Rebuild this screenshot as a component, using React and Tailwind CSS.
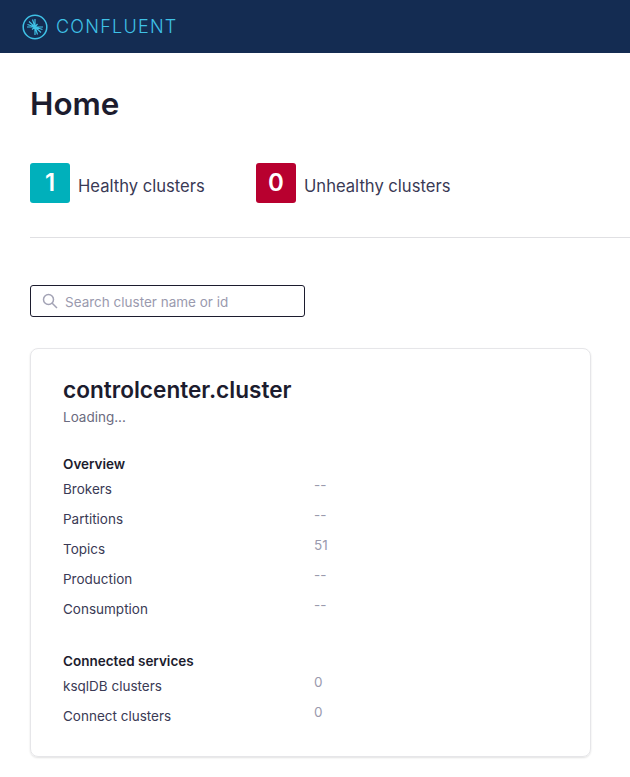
const font = { fontFamily: 'Inter, sans-serif' };

const Row = ({ label, value }) => (
  <div className="flex h-[30px]">
    <div className="w-[251px] pt-[5px] text-[13.5px] leading-5 text-[#3a3a55]">{label}</div>
    <div className="pt-[1px] text-[13.5px] leading-5 text-[#9a9aae]">{value}</div>
  </div>
);

const Stat = ({ count, label, color, width }) => (
  <div className={`flex items-center ${width}`}>
    <div className={`flex h-10 w-10 items-center justify-center rounded-[3px] text-2xl font-semibold text-white ${color}`}>
      {count}
    </div>
    <span className="ml-2 pt-[7px] text-[16.6px] text-[#3a3a55]">{label}</span>
  </div>
);

const Logo = () => (
  <svg width="26" height="26" viewBox="0 0 26 26" fill="none" stroke="#3fc1e6">
    <circle cx="13" cy="13" r="11.8" strokeWidth="1.5" />
    <path
      strokeWidth="1.2"
      d="M13 13L7 7.5M13 13L5.5 10.5M13 13L5 13M13 13L10.5 5.5M13 13L13 5M13 13L19 18.5M13 13L20.5 15.5M13 13L21 13M13 13L15.5 20.5M13 13L13 21M13 13L15.5 10M13 13L10 15.5"
    />
  </svg>
);

export default function App() {
  return (
    <div className="min-h-[777px] overflow-hidden bg-white" style={font}>
      <header className="flex h-[53px] items-center bg-[#142c52] pl-[22px]">
        <Logo />
        <span className="ml-[8px] text-[18px] font-light tracking-[1.25px] text-[#3fc1e6]">CONFLUENT</span>
      </header>

      <main className="pl-[30px]">
        <h1 className="mt-[31px] text-[31.4px] font-semibold leading-10 text-[#1c1c2e]">Home</h1>

        <div className="mt-[39px] flex">
          <Stat count="1" label="Healthy clusters" color="bg-[#00b0bb]" width="w-[226px]" />
          <Stat count="0" label="Unhealthy clusters" color="bg-[#b8002f]" width="w-[250px]" />
        </div>

        <div className="mt-[34px] h-px bg-[#e0e0e3]" />

        <div className="mt-[47px] flex h-[32px] w-[275px] items-center rounded-[3px] border border-[#1c1c2e] pl-[11px]">
          <svg width="16" height="16" viewBox="0 0 16 16" fill="none" stroke="#a3a3b5" strokeWidth="1.5">
            <circle cx="6.5" cy="6.5" r="5" />
            <path d="M10.2 10.2L15 15" />
          </svg>
          <span className="ml-[7px] pt-[2px] text-[13.5px] text-[#9a9aae]">Search cluster name or id</span>
        </div>

        <section className="mt-[31px] h-[409px] w-[561px] rounded-lg border border-[#e6e6e9] pl-[32px] pt-[27px] shadow-[0_1px_2px_rgba(0,0,0,0.12)]">
          <h2 className="text-[22.6px] font-semibold leading-7 text-[#1c1c2e]">controlcenter.cluster</h2>
          <div className="mt-[3px] text-[13.5px] leading-5 text-[#6b6b80]">Loading...</div>

          <h3 className="mt-[27px] text-[13.5px] font-semibold leading-5 text-[#1c1c2e]">Overview</h3>
          <Row label="Brokers" value="--" />
          <Row label="Partitions" value="--" />
          <Row label="Topics" value="51" />
          <Row label="Production" value="--" />
          <Row label="Consumption" value="--" />

          <h3 className="mt-[27px] text-[13.5px] font-semibold leading-5 text-[#1c1c2e]">Connected services</h3>
          <Row label="ksqlDB clusters" value="0" />
          <Row label="Connect clusters" value="0" />
        </section>
      </main>
    </div>
  );
}
